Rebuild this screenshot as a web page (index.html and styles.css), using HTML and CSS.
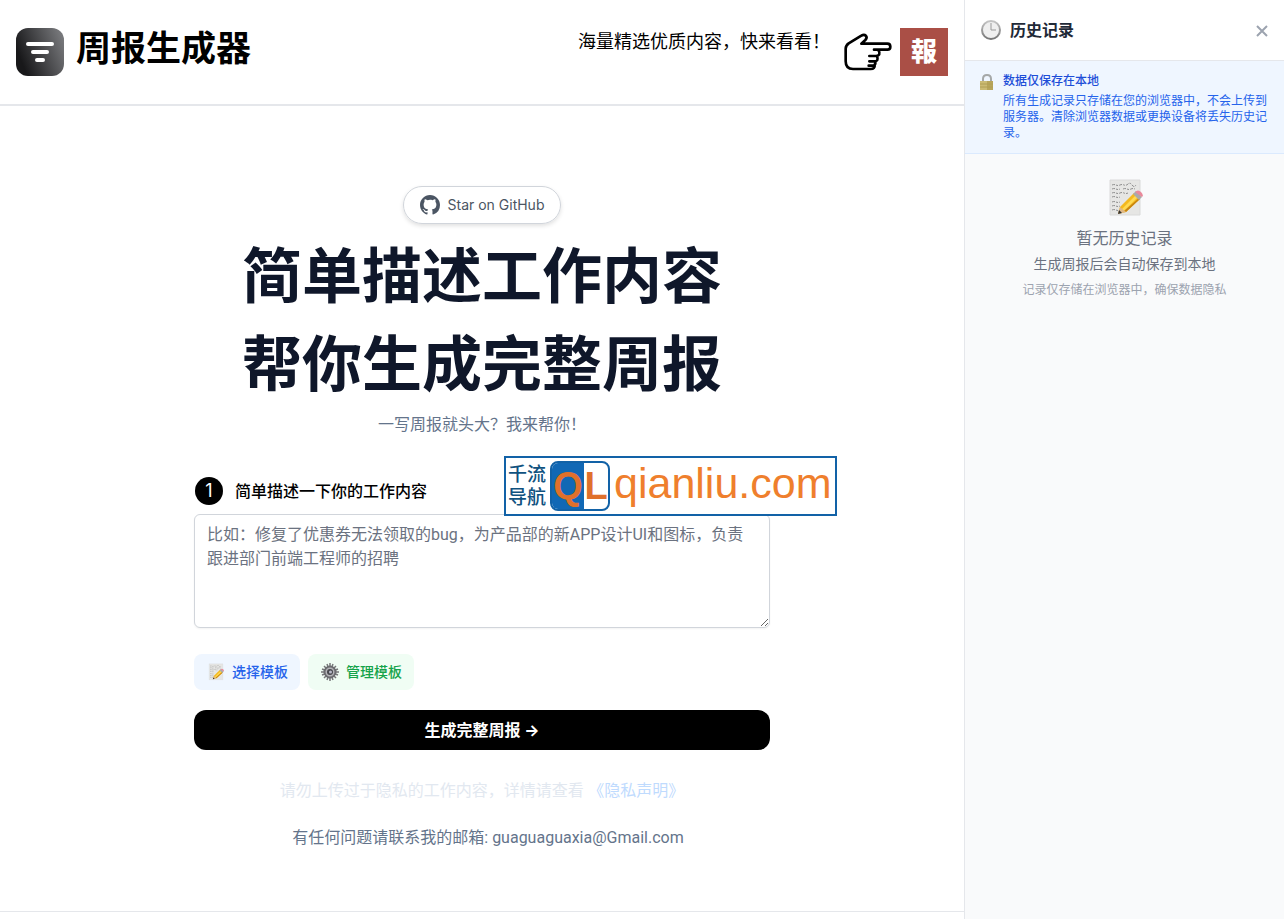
FILE: index.html
```html
<!DOCTYPE html>
<html lang="zh-CN">
  <head>
    <meta charset="UTF-8" />
    <meta name="viewport" content="width=device-width, initial-scale=1.0" />
    <title>周报生成器</title>
    <link rel="stylesheet" href="styles.css">
  </head>
  <body>
    <!-- shared icons -->
    <svg class="sprite" aria-hidden="true">
      <symbol id="icon-memo" viewBox="0 0 36 40">
        <path d="M3 2h30v35H3z" fill="#e6e6e4" stroke="#dadada" />
        <path d="M5 7q2-1 4 0t4 0 4 0 4-1 4 1 4 0M5 11q2-1 4 0t4 0M16 11q2-1 4 0t4 0 4 0M5 15q2-1 4 0t4 0 4 0 4 0M5 19q2-1 4 0t4 0M5 24q2-1 4 0t4 0M5 28q2-1 4 0t4 0M5 32q2-1 4 0t4 0" fill="none" stroke="#8f8f8f" stroke-width="1" stroke-dasharray="3 1 2 1" />
        <path d="M11 36l2-7L27 15l6 6-14 13z" fill="#f4b91f" />
        <path d="M15 31L29 17l2 2-14 14z" fill="#ffda53" />
        <path d="M19 34L33 21l-1-1-15 13z" fill="#c88510" />
        <path d="M11 36l2-7 6 5z" fill="#dfb987" />
        <path d="M11 36l1-4 3 3z" fill="#333" />
        <path d="M26 16l3-3 6 6-3 3z" fill="#aaa" />
        <path d="M28 14q3-3 6 0t1 5z" fill="#e9899b" />
      </symbol>
      <symbol id="icon-gear" viewBox="0 0 18 18">
        <path d="M9 0v18M0 9h18M3 3l12 12M15 3L3 15M6 1l6 16M12 1L6 17M1 6l16 6M1 12l16-6" stroke="#77777a" stroke-width="1.500" />
        <circle cx="9" cy="9" r="5.500" fill="#b4b4b8" stroke="#6c6c70" stroke-width="2" />
        <circle cx="9" cy="9" r="3" fill="#48484e" />
        <circle cx="9.500" cy="9" r="1.500" fill="#b9b9c8" />
      </symbol>
    </svg>

    <div class="layout">
      <div class="page">
        <header class="header">
          <a class="brand" href="#">
            <svg class="brand-logo" viewBox="0 0 48 48" aria-hidden="true">
              <defs>
                <linearGradient id="logoFill" x1="0" y1="0.700" x2="1" y2="0.300">
                  <stop offset="0.100" stop-color="#18181a" />
                  <stop offset="1" stop-color="#76777a" />
                </linearGradient>
              </defs>
              <rect width="48" height="48" rx="12" fill="url(#logoFill)" />
              <path d="M12 16h24M17 24h14M21 32h6" stroke="#fff" stroke-width="4" stroke-linecap="round" />
            </svg>
            <span class="brand-name">周报生成器</span>
          </a>
          <a class="promo" href="#">
            <span class="promo-text">海量精选优质内容，快来看看！</span>
            <svg class="promo-hand" viewBox="0 0 144 144" aria-hidden="true">
              <path d="M90 65h40c12 0 12-18 0-18H52l12-11c9-10-1-20-12-13L14 46c-7 5-9 9-9 16v38c0 16 8 23 22 23h53c9 0 13-4 12-14M103 66c7 11 3 18-8 18H76M99 85c4 9 1 15-7 15H76M94 101c1 8-2 12-7 12H74" fill="none" stroke="#000" stroke-width="8" stroke-linecap="round" stroke-linejoin="round" />
            </svg>
            <span class="promo-badge">報</span>
          </a>
        </header>

        <main class="main">
          <a class="github" href="#">
            <svg viewBox="0 0 24 24" aria-hidden="true">
              <path d="M12 2C6.477 2 2 6.484 2 12.017c0 4.425 2.865 8.180 6.839 9.504.5.092.682-.217.682-.483 0-.237-.008-.868-.013-1.703-2.782.605-3.369-1.343-3.369-1.343-.454-1.158-1.110-1.466-1.110-1.466-.908-.620.069-.608.069-.608 1.003.070 1.531 1.032 1.531 1.032.892 1.530 2.341 1.088 2.910.832.092-.647.350-1.088.636-1.338-2.220-.253-4.555-1.113-4.555-4.951 0-1.093.390-1.988 1.029-2.688-.103-.253-.446-1.272.098-2.650 0 0 .840-.270 2.750 1.026A9.564 9.564 0 0112 6.844c.850.004 1.705.115 2.504.337 1.909-1.296 2.747-1.027 2.747-1.027.546 1.379.202 2.398.100 2.651.640.700 1.028 1.595 1.028 2.688 0 3.848-2.339 4.695-4.566 4.943.359.309.678.920.678 1.855 0 1.338-.012 2.419-.012 2.747 0 .268.180.580.688.482A10.019 10.019 0 0022 12.017C22 6.484 17.522 2 12 2z" fill="currentColor" />
            </svg>
            Star on GitHub
          </a>
          <h1>简单描述工作内容<br />帮你生成完整周报</h1>
          <p class="lead">一写周报就头大？我来帮你！</p>

          <form class="form">
            <div class="step">
              <span class="step-num">1</span>
              <label for="content">简单描述一下你的工作内容</label>
              <div class="watermark">
                <span class="watermark-cn">千流<br />导航</span>
                <span class="watermark-logo"><b>Q</b><b>L</b></span>
                <span class="watermark-url">qianliu.com</span>
              </div>
            </div>
            <textarea id="content" rows="4" placeholder="比如：修复了优惠券无法领取的bug，为产品部的新APP设计UI和图标，负责跟进部门前端工程师的招聘"></textarea>
            <div class="templates">
              <button type="button" class="chip chip-blue">
                <svg aria-hidden="true"><use href="#icon-memo" /></svg>选择模板
              </button>
              <button type="button" class="chip chip-green">
                <svg aria-hidden="true"><use href="#icon-gear" /></svg>管理模板
              </button>
            </div>
            <button type="button" class="submit">生成完整周报 →</button>
          </form>

          <p class="privacy">请勿上传过于隐私的工作内容，详情请查看 <a href="#">《隐私声明》</a></p>
          <p class="contact">有任何问题请联系我的邮箱: guaguaguaxia@Gmail.com</p>
        </main>
        <footer class="footer"></footer>
      </div>

      <aside class="history">
        <div class="history-head">
          <svg class="clock" viewBox="0 0 22 22" aria-hidden="true">
            <defs>
              <linearGradient id="clockRim" x1="0" y1="0" x2="0" y2="1">
                <stop offset="0" stop-color="#c4c4c4" />
                <stop offset="1" stop-color="#777" />
              </linearGradient>
            </defs>
            <circle cx="11" cy="11" r="9" fill="#efefef" stroke="url(#clockRim)" stroke-width="2" />
            <path d="M11 4v7h5" fill="none" stroke="#999" />
          </svg>
          <h2>历史记录</h2>
          <button type="button" class="close" aria-label="关闭">
            <svg viewBox="0 0 12 12" aria-hidden="true">
              <path d="M1 1l10 10M11 1L1 11" stroke="currentColor" stroke-width="2" />
            </svg>
          </button>
        </div>
        <div class="notice">
          <svg class="lock" viewBox="0 0 16 18" aria-hidden="true">
            <path d="M4 9V6q0-4 4-4t4 4v3" fill="none" stroke="#a5a8a8" stroke-width="2" />
            <path d="M1 8h13v9H1z" fill="#b7a55b" />
            <path d="M1 8h7v9H1z" fill="#cbbb74" />
            <path d="M1 11h13M1 14h13" stroke="#b09e54" />
          </svg>
          <div>
            <strong>数据仅保存在本地</strong>
            <p>所有生成记录只存储在您的浏览器中，不会上传到服务器。清除浏览器数据或更换设备将丢失历史记录。</p>
          </div>
        </div>
        <div class="empty">
          <svg aria-hidden="true"><use href="#icon-memo" /></svg>
          <p class="empty-title">暂无历史记录</p>
          <p class="empty-text">生成周报后会自动保存到本地</p>
          <p class="empty-hint">记录仅存储在浏览器中，确保数据隐私</p>
        </div>
      </aside>
    </div>
  </body>
</html>
```
FILE: styles.css
```css
* {
  box-sizing: border-box;
}

body {
  margin: 0;
  font-family: Inter, "Noto Sans CJK SC", sans-serif;
  font-size: 16px;
  line-height: 24px;
  color: #000;
  background: #fff;
}

h1,
h2,
p {
  margin: 0;
}

a {
  color: inherit;
  text-decoration: none;
}

button {
  font: inherit;
  border: none;
  cursor: pointer;
}

.sprite {
  display: none;
}

.layout {
  display: flex;
  min-height: 100vh;
}

.page {
  flex: 1;
  min-width: 0;
  display: flex;
  flex-direction: column;
}

.header {
  display: flex;
  justify-content: space-between;
  padding: 28px 16px;
  border-bottom: 2px solid #e5e7eb;
}

.brand,
.promo {
  display: flex;
}

.brand {
  gap: 12px;
}

.brand-logo,
.promo-hand {
  width: 48px;
  height: 48px;
}

.brand-name {
  font-size: 35px;
  font-weight: 700;
  line-height: 40px;
}

.promo {
  gap: 8px;
}

.promo-text {
  font-size: 18px;
  line-height: 28px;
  margin-right: 6px;
}

.promo-badge {
  width: 48px;
  height: 48px;
  font-size: 26px;
  font-weight: 900;
  line-height: 48px;
  text-align: center;
  color: #fff;
  background: #aa4f46;
}

.main {
  flex: 1;
  display: flex;
  flex-direction: column;
  align-items: center;
  padding: 80px 16px 60px;
}

.github {
  display: flex;
  align-items: center;
  gap: 6px;
  padding: 6px 16px 6px 14px;
  font-size: 14px;
  color: #4b5563;
  border: 1px solid #d1d5db;
  border-radius: 999px;
  box-shadow: 0 2px 4px rgba(0, 0, 0, 0.12);
}

.github svg {
  width: 24px;
  height: 24px;
}

h1 {
  margin-top: 8px;
  font-size: 60px;
  font-weight: 700;
  line-height: 88px;
  text-align: center;
  color: #0f172a;
}

.lead {
  margin-top: 4px;
  color: #64748b;
}

.form {
  width: 100%;
  max-width: 576px;
  margin-top: 40px;
}

.step {
  position: relative;
  display: flex;
  align-items: center;
  gap: 12px;
  height: 30px;
}

.step-num {
  width: 28px;
  height: 28px;
  margin-left: 1px;
  font-size: 18px;
  line-height: 28px;
  text-align: center;
  color: #fff;
  background: #000;
  border-radius: 50%;
}

.step label {
  font-weight: 500;
}

/* banner laid over the form */
.watermark {
  position: absolute;
  left: 310px;
  bottom: -10px;
  display: flex;
  gap: 4px;
  width: 333px;
  height: 60px;
  padding: 3px 0 0 2px;
  white-space: nowrap;
  background: #fff;
  border: 2px solid #1262a7;
}

.watermark-cn {
  padding-top: 2px;
  font-size: 19px;
  font-weight: 500;
  line-height: 23px;
  color: #10527f;
}

.watermark-logo {
  flex: none;
  display: flex;
  width: 60px;
  height: 50px;
  font-family: "Liberation Sans", sans-serif;
  font-size: 38px;
  line-height: 46px;
  color: #e0702c;
  border: 2px solid #1262a7;
  border-radius: 8px;
  overflow: hidden;
}

.watermark-logo b {
  flex: 1;
  text-align: center;
}

.watermark-logo b:first-child {
  flex: 0 0 32px;
  background: #1168b5;
}

.watermark-url {
  font-family: "Liberation Sans", sans-serif;
  font-size: 43px;
  line-height: 44px;
  color: #ef7f2d;
}

textarea {
  display: block;
  width: 100%;
  margin-top: 8px;
  padding: 8px 12px;
  font: inherit;
  font-family: Roboto, "Noto Sans CJK SC", sans-serif;
  border: 1px solid #d1d5db;
  border-radius: 6px;
  box-shadow: 0 1px 2px rgba(0, 0, 0, 0.05);
}

textarea::placeholder {
  color: #6b7280;
}

.templates {
  display: flex;
  gap: 8px;
  margin-top: 26px;
}

.chip {
  display: flex;
  align-items: center;
  gap: 6px;
  padding: 8px 12px;
  font-size: 14px;
  font-weight: 500;
  line-height: 20px;
  border-radius: 8px;
}

.chip svg {
  width: 20px;
  height: 18px;
}

.chip-blue {
  color: #2563eb;
  background: #eff6ff;
}

.chip-green {
  color: #16a34a;
  background: #f0fdf4;
}

.submit {
  width: 100%;
  margin-top: 20px;
  padding: 8px 16px;
  font-weight: 700;
  color: #fff;
  background: #000;
  border-radius: 12px;
}

.privacy {
  margin-top: 28px;
  color: #e2e8f0;
}

.privacy a {
  color: #bfdbfe;
}

.contact {
  margin-top: 24px;
  padding-left: 12px;
  font-family: Roboto, "Noto Sans CJK SC", sans-serif;
  color: #64748b;
}

.footer {
  height: 8px;
  border-top: 1px solid #e5e7eb;
}

.history {
  flex: 0 0 320px;
  background: #f9fafb;
  border-left: 1px solid #e5e7eb;
}

.history-head {
  display: flex;
  align-items: center;
  gap: 8px;
  padding: 16px 16px 16px 15px;
  background: #fff;
  border-bottom: 1px solid #e5e7eb;
}

.history-head h2 {
  flex: 1;
  font-size: 16px;
  font-weight: 600;
  line-height: 28px;
  color: #1f2937;
}

.clock {
  width: 22px;
  height: 22px;
}

.close {
  padding: 2px 0 0;
  color: #9ca3af;
  background: none;
}

.close svg {
  display: block;
  width: 12px;
  height: 12px;
}

.notice {
  display: flex;
  gap: 8px;
  padding: 12px 14px;
  font-size: 12px;
  line-height: 16px;
  color: #2563eb;
  background: #eff6ff;
  border-bottom: 1px solid #dbeafe;
}

.notice strong {
  display: block;
  margin-bottom: 4px;
  font-weight: 500;
  color: #1d4ed8;
}

.lock {
  flex: none;
  width: 16px;
  height: 18px;
}

.empty {
  display: flex;
  flex-direction: column;
  align-items: center;
  padding: 24px 16px;
  color: #6b7280;
}

.empty svg {
  width: 36px;
  height: 40px;
}

.empty-title {
  margin-top: 8px;
}

.empty-text {
  margin-top: 4px;
  font-size: 14px;
  line-height: 20px;
}

.empty-hint {
  margin-top: 8px;
  font-size: 12px;
  line-height: 16px;
  color: #9ca3af;
}
```
